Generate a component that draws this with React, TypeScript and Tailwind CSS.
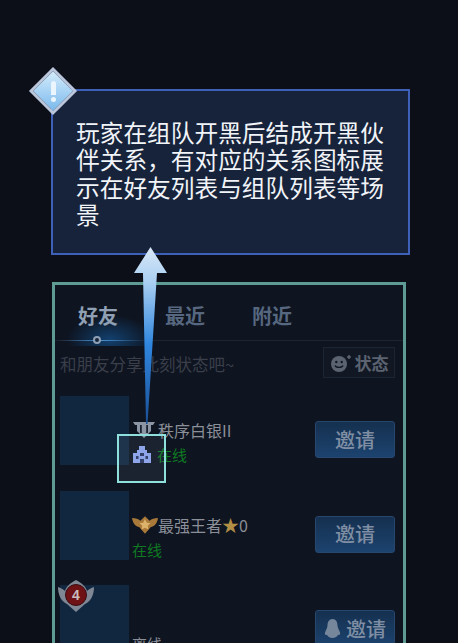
const cjk = "font-['Noto_Sans_CJK_SC','Liberation_Sans',sans-serif]";

function SilverIcon() {
  return (
    <svg width="24" height="20" viewBox="0 0 24 20">
      <path d="M1 2h22l-2 3h-2v6l-7 7-7-7V5H3z" fill="#8b95a3" />
      <path d="M8 5h1.800v8H8zM14.200 5H16v8h-1.800z" fill="#1c2431" />
    </svg>
  );
}

function KingIcon() {
  return (
    <svg width="26" height="21" viewBox="0 0 28 22">
      <path d="M0 4c4 0 7 1 9 3l5-5 5 5c2-2 5-3 9-3-1 6-4 9-8 10l-6 7-6-7C4 13 1 10 0 4z" fill="#a9793a" />
      <path d="M14 5l2 4 4 .5-3 2.800.8 4L14 14.500 10.200 16.300l.8-4-3-2.800 4-.5z" fill="#dcb36a" />
    </svg>
  );
}

function TeamIcon() {
  return (
    <svg width="20" height="20" viewBox="0 0 20 20">
      <path d="M7 1h6v4h2v3h4v10H1V8h4V5h2z" fill="#8fa4ee" />
      <path d="M8 8h4v3H8zM4 11h2.500v3H4zM13.500 11H16v3h-2.500zM8 14h4v4H8z" fill="#27345f" />
    </svg>
  );
}

function MedalBadge() {
  return (
    <svg width="38" height="36" viewBox="0 0 38 36">
      <path d="M1 10c3 1 5 2 7 4 1-4 5-8 11-11 6 3 10 7 11 11 2-2 4-3 7-4 0 8-3 14-9 17l-9 8-9-8C4 24 1 18 1 10z" fill="#7f8794" />
      <circle cx="19" cy="18" r="10.500" fill="#6e1216" />
      <circle cx="19" cy="18" r="10.500" fill="none" stroke="#3a0d12" />
      <text x="19" y="23" textAnchor="middle" fontSize="14" fontWeight="700" fill="#c9bcbc" fontFamily="Liberation Sans, sans-serif">4</text>
    </svg>
  );
}

function FriendRow({ rank, statusIcon, status, statusTone, invite }: { rank?: React.ReactNode; statusIcon?: React.ReactNode; status: string; statusTone: string; invite?: boolean }) {
  return (
    <div className="flex h-[94.5px] pl-[5px] pr-[8px]">
      <div className="w-[69px] h-[69px] bg-[#11263f] shrink-0" />
      <div className="flex-1 pl-[3px] flex flex-col">
        <div className="h-[24px] mt-[22px] flex items-center text-[16px] leading-none text-[#8b8f98]">{rank}</div>
        <div className={`mt-[3px] flex items-center gap-[5px] text-[15px] leading-[20px] ${statusTone}`}>
          {statusIcon}
          <span>{status}</span>
        </div>
      </div>
      <div className="mt-[25px] w-[80px] h-[37px] shrink-0 rounded-[3px] border border-[#27476f] bg-gradient-to-b from-[#15304f] to-[#1c436f] flex items-center justify-center gap-[5px] text-[20px] font-medium text-[#7f8ea3]">
        {invite && (
          <svg width="17" height="21" viewBox="0 0 17 21">
            <path d="M8.500 1C12 1 13.500 4 13.500 7.500c0 2 1.500 4 2.500 7 .6 2-.6 3-2 2.300-.4 2-3 3.200-5.500 3.200S3.400 18.800 3 16.800c-1.400.7-2.600-.3-2-2.300 1-3 2.500-5 2.500-7C3.500 4 5 1 8.500 1z" fill="#76869b" />
          </svg>
        )}
        邀请
      </div>
    </div>
  );
}

export default function App() {
  return (
    <div className={`relative w-[458px] h-[643px] overflow-hidden bg-[#0c0e18] ${cjk}`}>
      <div className="pt-[89px] pl-[51px]">
        <div className="w-[359px] h-[166px] border-2 border-[#3f60b8] bg-[#17233a] pl-[23px] pt-[28px] text-[23.700px] leading-[27.300px] text-[#f1f4f8]">
          玩家在组队开黑后结成开黑伙
          <br />
          伴关系，有对应的关系图标展
          <br />
          示在好友列表与组队列表等场
          <br />景
        </div>

        <div className="mt-[27px] ml-[1px] w-[354px] h-[400px] border-[3px] border-[#5e9b94] bg-[#0e1420]">
          <div className="relative h-[56px] border-b border-[#1c2331] flex items-center pt-[6px] text-[20px] font-bold text-[#56677f]">
            <span className="absolute left-[10px] bottom-[-6px] w-[90px] h-[32px] bg-[radial-gradient(ellipse_at_50%_80%,#12406e_0%,transparent_68%)]" />
            <span className="relative ml-[23px] text-[#8fa0b5]">好友</span>
            <span className="relative ml-[47px]">最近</span>
            <span className="relative ml-[47px]">附近</span>
            <span className="absolute left-[4px] bottom-[-1px] w-[84px] h-px bg-gradient-to-r from-transparent via-[#4d8fcb] to-transparent" />
            <span className="absolute left-[38px] bottom-[-4px] w-[8px] h-[8px] rounded-full border-2 border-[#8fa0b5] bg-[#14263d]" />
          </div>

          <div className="h-[55px] flex items-start pl-[5px] pr-[8px] pt-[6px]">
            <span className="flex-1 pt-[7px] text-[16.500px] leading-[20px] text-[#3a3f4a]">和朋友分享此刻状态吧~</span>
            <div className="w-[72px] h-[31px] border border-[#1c2534] bg-[#111824] flex items-center justify-center gap-[3px] text-[17px] font-bold text-[#5b6270]">
              <svg width="22" height="20" viewBox="0 0 22 20">
                <circle cx="9" cy="11" r="8" fill="#5b6270" />
                <circle cx="6.300" cy="9" r="1.200" fill="#111824" />
                <circle cx="11.700" cy="9" r="1.200" fill="#111824" />
                <path d="M5 12.500c1 2.500 7 2.500 8 0" stroke="#111824" strokeWidth="1.400" fill="none" />
                <path d="M19 2v4M17 4h4" stroke="#5b6270" strokeWidth="1.500" />
              </svg>
              状态
            </div>
          </div>

          <div>
            <FriendRow
              rank={<><SilverIcon /><span className="ml-[2px]">秩序白银II</span></>}
              statusIcon={<TeamIcon />}
              status="在线"
              statusTone="text-[#0f7a22]"
            />
            <FriendRow
              rank={<><KingIcon /><span>最强王者</span><span className="text-[#b28f45] text-[17px]">★</span><span>0</span></>}
              status="在线"
              statusTone="text-[#0f7a22]"
            />
            <FriendRow status="离线" statusTone="text-[#8b8f98]" invite />
          </div>
        </div>
      </div>

      {/* overlays */}
      <div className="absolute left-[29px] top-[67px] w-[48px] h-[48px] flex items-center justify-center">
        <div className="w-[34px] h-[34px] rotate-45 border-[3px] border-[#b9c6dc] bg-gradient-to-br from-[#d4ecfb] to-[#7ab9ec]" />
        <span className="absolute w-[5px] h-[14px] top-[14px] rounded-t-full bg-[#eaf5fd]" />
        <span className="absolute w-[5px] h-[5px] top-[30px] rounded-full bg-[#eaf5fd]" />
      </div>

      <div className="absolute left-[57px] top-[577px]"><MedalBadge /></div>

      <div className="absolute left-[117px] top-[434px] w-[49px] h-[49px] border-2 border-[#8fe0dc] bg-[#8fb0d0]/10" />

      <svg className="absolute left-[134px] top-[246px]" width="34" height="190" viewBox="0 0 34 190">
        <defs>
          <linearGradient id="arrow" x1="0" y1="0" x2="0" y2="1">
            <stop offset="0" stopColor="#d9e8f7" />
            <stop offset="0.2" stopColor="#a9cff2" />
            <stop offset="0.55" stopColor="#2f86de" />
            <stop offset="1" stopColor="#1a4f96" />
          </linearGradient>
        </defs>
        <path d="M16.500 1L33 27H23L13.500 178h-1.500L9 27H0z" fill="url(#arrow)" />
      </svg>
    </div>
  );
}
